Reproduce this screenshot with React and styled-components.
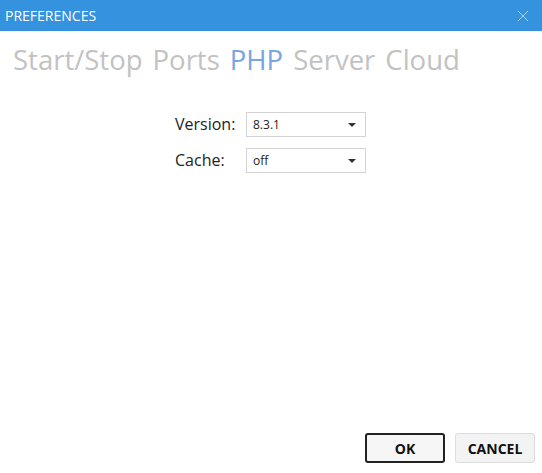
import styled, { createGlobalStyle } from "styled-components";

const Global = createGlobalStyle`
    html, body { margin: 0; padding: 0; background: #fff; }
    body { font-family: "Open Sans", "Noto Sans", sans-serif; }
`;

const Window = styled.div`
    width: 542px;
    height: 473px;
    display: flex;
    flex-direction: column;
    background: #fff;
    overflow: hidden;
`;

const TitleBar = styled.div`
    height: 31px;
    background: #3592de;
    color: #fff;
    display: flex;
    align-items: center;
    justify-content: space-between;
    padding: 0 14px 0 5px;
    font-size: 14px;
    flex-shrink: 0;
`;

const Close = styled.span`
    display: flex;
    opacity: 0.6;
`;

const Tabs = styled.nav`
    display: flex;
    gap: 10px;
    padding: 8px 0 0 13px;
    font-size: 27.5px;
    line-height: 42px;
`;

const Tab = styled.span`
    color: ${(p) => (p.$active ? "#7ba4e2" : "#c2c2c2")};
    cursor: pointer;
`;

const Form = styled.div`
    display: grid;
    grid-template-columns: 61px 120px;
    column-gap: 10px;
    row-gap: 11px;
    padding: 31px 0 0 175px;
`;

const Label = styled.label`
    font-size: 16px;
    color: #222;
    line-height: 25px;
    white-space: nowrap;
`;

const Select = styled.div`
    height: 25px;
    box-sizing: border-box;
    border: 1px solid #d4d4d4;
    display: flex;
    align-items: center;
    justify-content: space-between;
    padding: 0 9px 0 6px;
    font-size: 12px;
    color: #222;
`;

const Caret = styled.span`
    width: 0;
    height: 0;
    border-left: 4px solid transparent;
    border-right: 4px solid transparent;
    border-top: 4px solid #333;
`;

const Footer = styled.div`
    margin-top: auto;
    display: flex;
    justify-content: flex-end;
    gap: 10px;
    padding: 0 7px 10px 0;
`;

const Button = styled.button`
    width: 80px;
    height: 30px;
    box-sizing: border-box;
    border-radius: 3px;
    border: ${(p) => (p.$primary ? "2px solid #222" : "1px solid #dcdcdc")};
    background: ${(p) => (p.$primary ? "#f6f6f6" : "#f3f3f3")};
    font-family: "Open Sans", "Noto Sans", sans-serif;
    font-weight: 700;
    font-size: 14px;
    color: #111;
    cursor: pointer;
`;

const tabs = ["Start/Stop", "Ports", "PHP", "Server", "Cloud"];

const App = () => {
    return (
        <>
            <Global />
            <Window>
                <TitleBar>
                    <span>PREFERENCES</span>
                    <Close>
                        <svg width="10" height="10" viewBox="0 0 10 10">
                            <path d="M0 0L10 10M10 0L0 10" stroke="#fff" strokeWidth="1" />
                        </svg>
                    </Close>
                </TitleBar>
                <Tabs>
                    {tabs.map((t) => (
                        <Tab key={t} $active={t === "PHP"}>{t}</Tab>
                    ))}
                </Tabs>
                <Form>
                    <Label>Version:</Label>
                    <Select>8.3.1<Caret /></Select>
                    <Label>Cache:</Label>
                    <Select>off<Caret /></Select>
                </Form>
                <Footer>
                    <Button $primary>OK</Button>
                    <Button>CANCEL</Button>
                </Footer>
            </Window>
        </>
    );
};

export default App;
